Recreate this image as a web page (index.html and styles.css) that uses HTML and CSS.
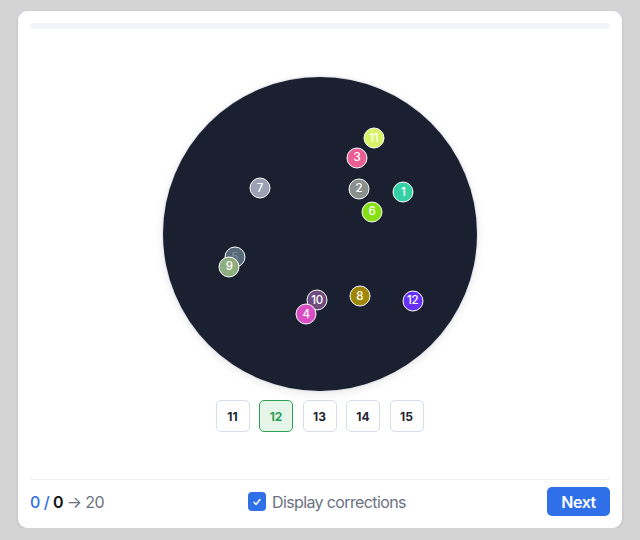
FILE: index.html
```html
<!DOCTYPE html>
<html>
<head>
<meta charset="utf-8">
<link rel="stylesheet" href="styles.css">
</head>
<body>
<div class="card">
  <div class="progress"><div class="progress-fill"></div></div>
  <div class="main">
    <div class="disc">
      <span class="dot" style="left:210.7px;top:61.3px;background:#d6f465">11</span>
      <span class="dot" style="left:194px;top:80.7px;background:#ea5f93">3</span>
      <span class="dot" style="left:97px;top:111.3px;background:#99a1b3">7</span>
      <span class="dot" style="left:196px;top:111.7px;background:#8a908e">2</span>
      <span class="dot" style="left:240.3px;top:115px;background:#35d0a4">1</span>
      <span class="dot" style="left:209px;top:134.7px;background:#86e012">6</span>
      <span class="dot" style="left:71.7px;top:180.3px;background:#566a7a;color:#7b8c99">5</span>
      <span class="dot" style="left:66.3px;top:189.7px;background:#8fae80">9</span>
      <span class="dot" style="left:154px;top:223px;background:#6e4c7e">10</span>
      <span class="dot" style="left:143px;top:237.3px;background:#d94fc3">4</span>
      <span class="dot" style="left:196.7px;top:219px;background:#a08605">8</span>
      <span class="dot" style="left:249.7px;top:223.7px;background:#6630f6">12</span>
    </div>
    <div class="choices">
      <button class="choice">11</button>
      <button class="choice selected">12</button>
      <button class="choice">13</button>
      <button class="choice">14</button>
      <button class="choice">15</button>
    </div>
  </div>
  <div class="footer">
    <div class="score"><span class="good">0</span> <span class="sep">/</span> <span class="total">0</span> <span class="goal">→ 20</span></div>
    <label class="toggle">
      <span class="box"><svg width="12" height="12" viewBox="0 0 12 12"><path d="M3 6.3l2 2.1 4-4.8" fill="none" stroke="#fff" stroke-width="1.5" stroke-linecap="round" stroke-linejoin="round"/></svg></span>
      <span class="toggle-label">Display corrections</span>
    </label>
    <button class="next">Next</button>
  </div>
</div>
</body>
</html>
```
FILE: styles.css
```css
html, body {
  margin: 0;
  padding: 0;
  background: #d4d4d4;
  font-family: Inter, "Noto Sans", sans-serif;
}
.card {
  box-sizing: border-box;
  margin: 11px 18px 0 18px;
  height: 517px;
  background: #fff;
  border-radius: 9px;
  box-shadow: 0 1px 3px rgba(0,0,0,0.12), 0 0 0 1px rgba(200,205,220,0.4);
  padding: 12px 12px 12px 12px;
  display: flex;
  flex-direction: column;
}
.progress {
  height: 6px;
  background: #f2f4f8;
  border-radius: 3px;
  flex: none;
}
.main {
  flex: 1;
  display: flex;
  flex-direction: column;
  align-items: center;
  padding-top: 48px;
}
.disc {
  position: relative;
  width: 314px;
  height: 314px;
  border-radius: 50%;
  background: #1a2030;
  box-shadow: 0 0 0 1px #dfe3ea, 0 2px 8px rgba(30,36,51,0.12);
}
.dot {
  position: absolute;
  box-sizing: border-box;
  width: 21px;
  height: 21px;
  transform: translate(-50%, -50%);
  border: 1.5px solid #fff;
  border-radius: 50%;
  color: #fff;
  font-size: 11.5px;
  font-weight: 500;
  letter-spacing: -0.3px;
  display: flex;
  align-items: center;
  justify-content: center;
  line-height: 1;
}
.choices {
  display: flex;
  gap: 9.5px;
  margin-top: 9px;
  margin-left: -1px;
}
.choice {
  box-sizing: border-box;
  width: 34px;
  height: 32px;
  border: 1.5px solid #d5dcea;
  border-radius: 5px;
  background: #fff;
  color: #1e2433;
  font-family: Inter, sans-serif;
  font-size: 12px;
  font-weight: 700;
  padding: 0;
}
.choice.selected {
  background: #e6f5ea;
  border-color: #2f9e55;
  color: #2f9e55;
}
.footer {
  flex: none;
  border-top: 1px solid #edf0f4;
  padding-top: 7px;
  height: 29px;
  display: flex;
  align-items: center;
  justify-content: space-between;
}
.score {
  font-size: 16px;
  color: #6b7280;
  width: 140px;
  letter-spacing: -0.6px;
}
.good, .sep { color: #2f6fe8; font-weight: 500; }
.total { color: #111; font-weight: 600; }
.goal { color: #6b7280; }
.toggle {
  display: flex;
  align-items: center;
  gap: 6px;
  margin-left: 78px;
}
.box {
  width: 18px;
  height: 19px;
  background: #2f6fe8;
  border-radius: 4px;
  display: flex;
  align-items: center;
  justify-content: center;
}
.toggle-label {
  font-size: 16px;
  color: #6b7280;
  letter-spacing: -0.62px;
}
.next {
  margin-left: auto;
  width: 63px;
  height: 29px;
  border: none;
  border-radius: 5px;
  background: #2f6fe8;
  color: #fff;
  font-family: Inter, sans-serif;
  font-size: 16px;
  font-weight: 600;
  letter-spacing: -0.4px;
  padding: 0;
}
```
